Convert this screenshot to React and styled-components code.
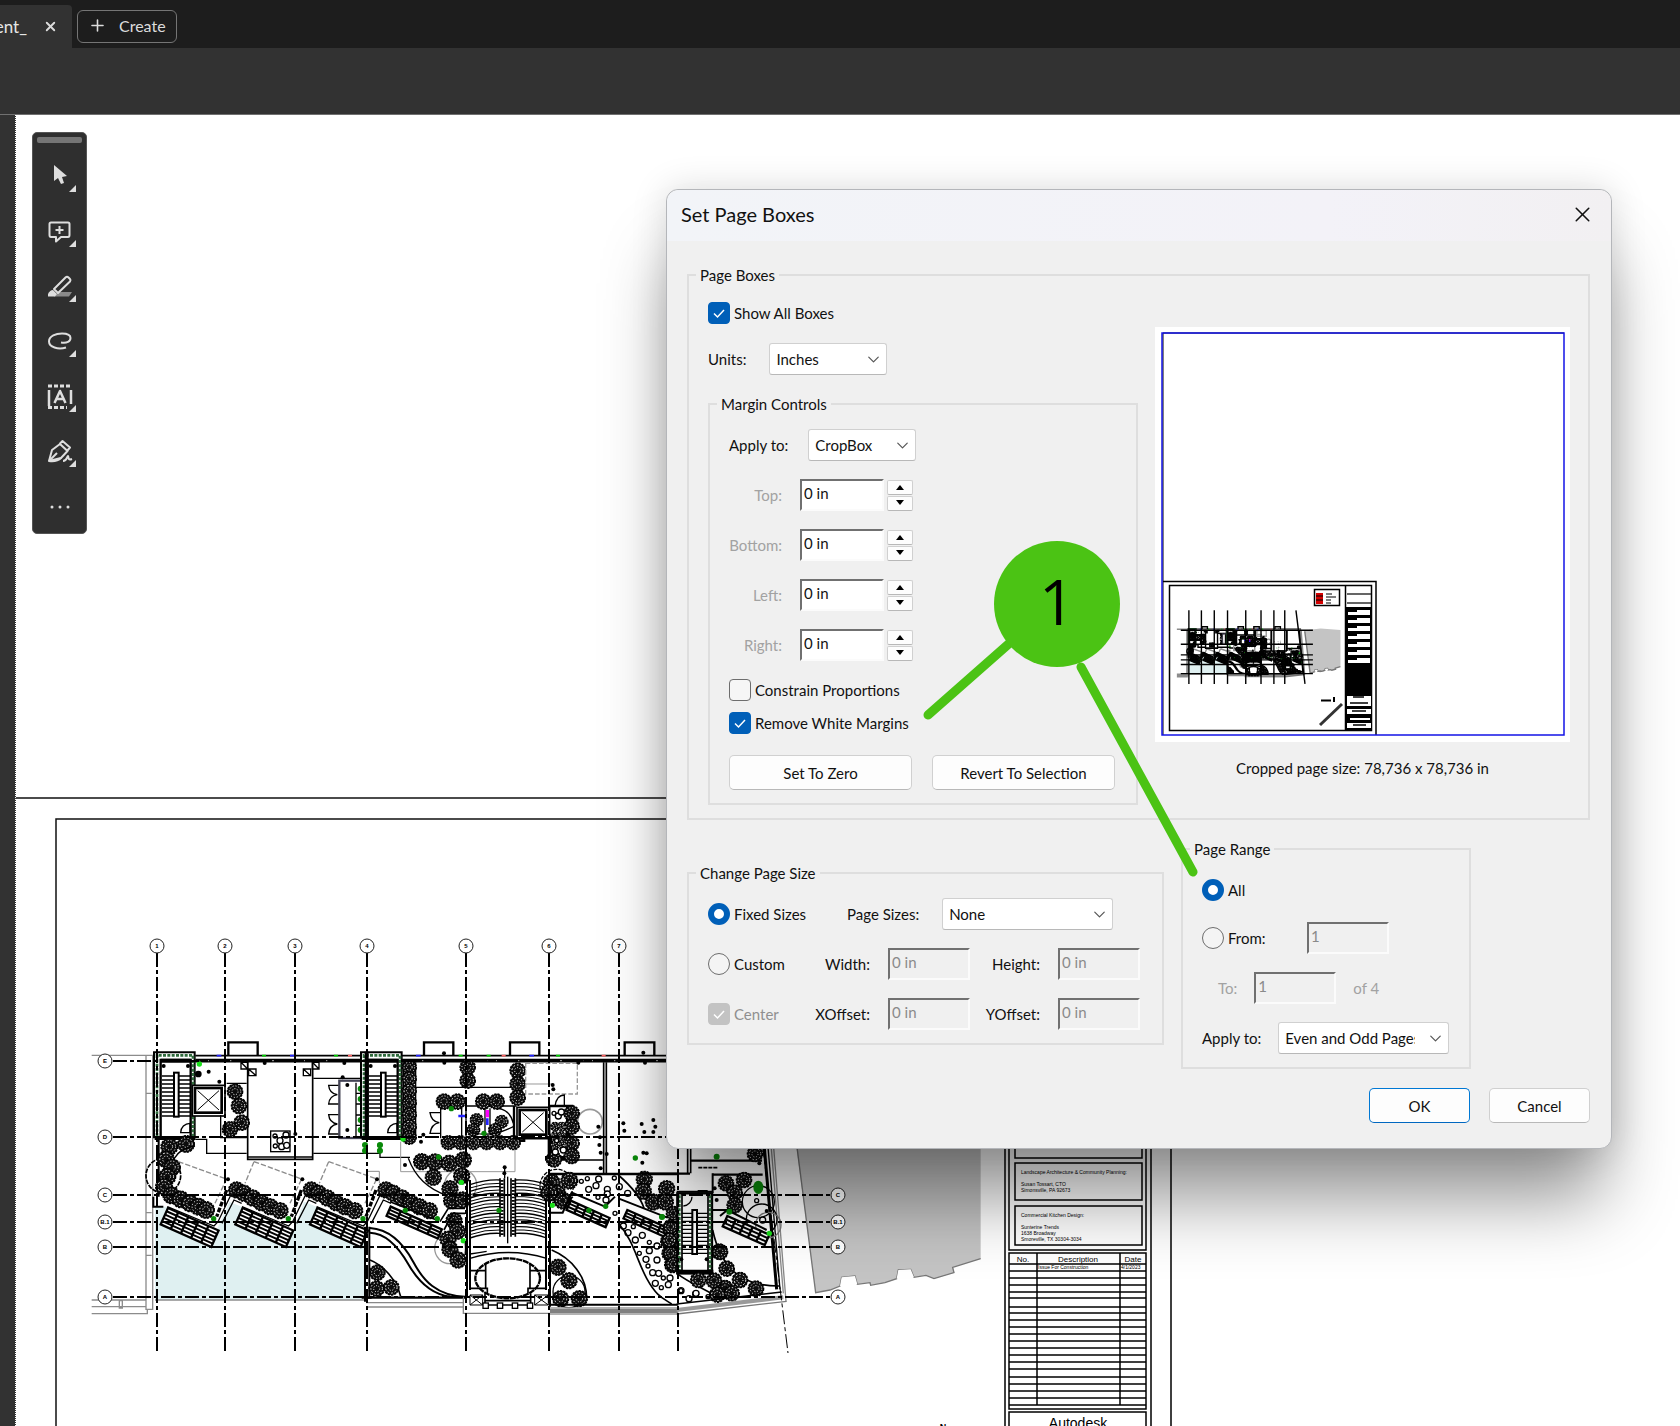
import React, { useState } from "react";
import styled, { createGlobalStyle } from "styled-components";
import { ChevronDown, Plus, X } from "lucide-react";

const GlobalStyle = createGlobalStyle`
	:root {
		--chrome: #323232;
		--dialog: #f0f0f0;
		--accent: #005fb8;
		--line: #dedede;
		--callout: #4bc314;
	}
	* {
		box-sizing: border-box;
	}
	body {
		margin: 0;
		background: #fff;
		color: #111;
		font-family: Lato, "Open Sans", sans-serif;
		font-size: 15px;
		line-height: 20px;
	}
	button, input, select {
		font: inherit;
		color: inherit;
	}
`;

const Shell = styled.div`
	position: relative;
	display: flex;
	flex-direction: column;
	min-height: 100vh;
	overflow: hidden;
`;

/* ---------- application chrome ---------- */

const TabBar = styled.header`
	display: flex;
	align-items: flex-end;
	gap: 5px;
	height: 48px;
	background: #1d1d1d;
	color: #e6e6e6;
`;

const Tab = styled.div`
	display: flex;
	align-items: center;
	justify-content: flex-end;
	gap: 16px;
	width: 72px;
	height: 43px;
	padding-right: 14px;
	border-top-right-radius: 4px;
	background: var(--chrome);
	font-size: 17px;
	overflow: hidden;
`;

const IconButton = styled.button`
	display: flex;
	padding: 0;
	border: 0;
	background: none;
`;

const CreateButton = styled.button`
	display: flex;
	align-items: center;
	gap: 12px;
	height: 33px;
	margin-bottom: 5px;
	padding: 0 10px 2px;
	border: 1px solid #757575;
	border-radius: 6px;
	background: none;
	color: #dcdcdc;
	font-size: 16px;
`;

const Ribbon = styled.div`
	height: 67px;
	border-bottom: 1px solid #707070;
	background: var(--chrome);
`;

const Workspace = styled.main`
	display: flex;
	flex: 1;
	position: relative;
`;

const Gutter = styled.div`
	width: 16px;
	border-right: 1px dotted #fff;
	background: var(--chrome);
`;

const Sheet = styled.svg`
	display: block;
	flex: none;
`;

const Palette = styled.nav`
	position: absolute;
	top: 17px;
	left: 32px;
	display: flex;
	flex-direction: column;
	align-items: center;
	width: 55px;
	padding: 4px 0 0;
	border: 1px solid #555;
	border-radius: 5px;
	background: #2f2f2f;
`;

const Grip = styled.div`
	width: 45px;
	height: 6px;
	margin-bottom: 8px;
	border-radius: 2px;
	background: #757575;
`;

const ToolButton = styled.button`
	display: flex;
	width: 53px;
	height: 55px;
	padding: 0;
	border: 0;
	background: none;

	&:last-child {
		height: 52px;
	}
`;

/* ---------- dialog ---------- */

const DialogLayer = styled.div`
	position: absolute;
	inset: 0;
	display: flex;
	justify-content: flex-end;
	align-items: flex-start;
	padding: 189px 68px 0 0;
`;

const Dialog = styled.section`
	position: relative;
	width: 946px;
	border: 1px solid #b4b6ba;
	border-radius: 12px;
	background: var(--dialog);
	box-shadow: 0 60px 72px -10px rgba(0, 0, 0, 0.42), 0 0 36px rgba(0, 0, 0, 0.14);
`;

const DialogHeader = styled.div`
	display: flex;
	align-items: center;
	justify-content: space-between;
	height: 51px;
	padding: 0 16px 3px 14px;
	border-radius: 12px 12px 0 0;
	background: linear-gradient(90deg, #f2f4f8, #f3f2f8 70%, #f2f0f2);
`;

const DialogTitle = styled.h1`
	margin: 0;
	font-size: 20px;
	font-weight: 400;
	line-height: 26px;
`;

const DialogBody = styled.form`
	display: flex;
	flex-direction: column;
	gap: 19px;
	padding: 24px 21px 25px 20px;
`;

const Group = styled.fieldset`
	display: flex;
	flex-direction: column;
	gap: 18px;
	min-width: 0;
	width: ${({ $width }) => ($width ? `${$width}px` : "auto")};
	margin: 0;
	padding: ${({ $top }) => $top || 15}px 18px 13px 19px;
	border: 2px solid var(--line);
`;

const Legend = styled.legend`
	margin-left: -12px;
	padding: 0 4px;
`;

const Columns = styled.div`
	display: flex;
	align-items: ${({ $align }) => $align || "flex-start"};
	gap: 17px;
`;

const Stack = styled.div`
	display: flex;
	flex-direction: column;
	gap: ${({ $gap }) => $gap || 19}px;
	padding-bottom: ${({ $bottom }) => $bottom || 0}px;
`;

const Row = styled.div`
	display: flex;
	align-items: center;
	gap: ${({ $gap }) => $gap || 20}px;
	min-height: 28px;
	padding-left: ${({ $indent }) => $indent || 0}px;
`;

const Label = styled.label`
	flex: none;
	width: ${({ $width }) => ($width ? `${$width}px` : "auto")};
	text-align: ${({ $width }) => ($width ? "right" : "left")};
	color: ${({ $muted }) => ($muted ? "#a2a2a2" : "inherit")};
`;

const SelectBox = styled.span`
	position: relative;
	display: block;
	width: ${({ $width }) => $width}px;

	svg {
		position: absolute;
		top: 7px;
		right: 4px;
		pointer-events: none;
	}
`;

const Select = styled.select`
	appearance: none;
	width: 100%;
	height: 32px;
	padding: 0 33px 0 6px;
	border: 1px solid #d0d0d0;
	border-bottom-color: #b8b8b8;
	border-radius: 3px;
	background: #fff;
`;

const TextInput = styled.input`
	width: 84px;
	height: 32px;
	padding: 0 2px 4px;
	border: 2px solid;
	border-color: #707070 #fbfbfb #fbfbfb #707070;
	background: #fff;

	&:disabled {
		width: 82px;
		background: var(--dialog);
		color: #8a8a8a;
	}
`;

const Spinner = styled.span`
	display: flex;
	flex-direction: column;
	gap: 1px;
`;

const SpinButton = styled.button`
	display: flex;
	align-items: center;
	justify-content: center;
	width: 26px;
	height: 15px;
	padding: 0;
	border: 1px solid #d0d0d0;
	border-bottom-color: #b8b8b8;
	border-radius: 2px;
	background: #fdfdfd;
`;

const ChoiceLabel = styled.label`
	display: flex;
	align-items: center;
	gap: 4px;
	width: ${({ $width }) => ($width ? `${$width}px` : "fit-content")};
	color: ${({ $muted }) => ($muted ? "#8f8f8f" : "inherit")};
	white-space: nowrap;
`;

const ChoiceMark = styled.span`
	position: relative;
	display: flex;
	width: 22px;
	height: 22px;

	svg {
		position: absolute;
		top: 4px;
		left: 4px;
		pointer-events: none;
	}
`;

const CheckInput = styled.input`
	appearance: none;
	width: 22px;
	height: 22px;
	margin: 0;
	border: 1px solid #6d6d6d;
	border-radius: 4px;
	background: #f6f6f6;

	&:checked {
		border-color: var(--accent);
		background: var(--accent);
	}
	&:checked:disabled {
		border-color: #c3c3c3;
		background: #c3c3c3;
	}
`;

const RadioInput = styled.input`
	appearance: none;
	flex: none;
	width: 22px;
	height: 22px;
	margin: 0;
	border: 1px solid #6d6d6d;
	border-radius: 50%;
	background: #f4f4f4;

	&:checked {
		border: 6px solid var(--accent);
		background: #fff;
	}
`;

const PushButton = styled.button`
	width: ${({ $width }) => $width || 183}px;
	height: 35px;
	border: 1px solid ${({ $primary }) => ($primary ? "#0078d4" : "#d0d0d0")};
	border-bottom-color: ${({ $primary }) => ($primary ? "#0067c0" : "#b8b8b8")};
	border-radius: 5px;
	background: #fdfdfd;
`;

const SizeGrid = styled.div`
	display: grid;
	grid-template-columns: 92px 52px 82px 52px 82px;
	column-gap: 18px;
	row-gap: 18px;
	align-items: center;

	${Label} {
		justify-self: end;
	}
`;

const PageSizeCell = styled.div`
	grid-column: 2 / -1;
	display: flex;
	align-items: center;
	gap: 23px;
	padding-left: 29px;
`;

const Preview = styled.figure`
	display: flex;
	flex-direction: column;
	align-items: center;
	gap: 16px;
	margin: 25px 0 0;
`;

const Footer = styled.div`
	display: flex;
	justify-content: flex-end;
	gap: 19px;
`;

const Callout = styled.svg`
	position: absolute;
	top: 339px;
	left: 249px;
	pointer-events: none;
`;

const CalloutStroke = styled.path`
	fill: none;
	stroke: var(--callout);
	stroke-width: 9;
	stroke-linecap: round;
`;

const CalloutDisc = styled.circle`
	fill: var(--callout);
`;

const CalloutNumber = styled.text`
	font-family: "Open Sans", sans-serif;
	font-size: 63px;
	text-anchor: middle;
`;

/* ---------- drawing ---------- */

const Fleck = styled.circle`
	fill: none;
	stroke: #fff;
`;

const Ink = styled.g`
	fill: none;
	stroke: #000;
	stroke-width: 4;
`;

// small copy of the plan, where every stroke keeps the same weight
const Miniature = styled.g`
	* {
		vector-effect: non-scaling-stroke;
		stroke-width: 1.4;
		stroke-dasharray: none;
	}
	${Fleck} {
		display: none;
	}
`;

const SheetText = styled.text`
	font-family: "Liberation Sans", sans-serif;
	font-size: ${({ $size }) => $size || 5}px;
	font-weight: ${({ $bold }) => ($bold ? 700 : 400)};
	text-anchor: ${({ $middle }) => ($middle ? "middle" : "start")};
`;

const AXES = [157, 225, 295, 367, 466, 549, 619, 678];
const LEVELS = [
	["E", 1061],
	["D", 1137],
	["C", 1195],
	["B.1", 1222],
	["B", 1247],
	["A", 1297],
];

const Trees = ({ at, r = 24 }) => (
	<>
		{at.map(([x, y], i) => (
			<g key={i}>
				<circle cx={x} cy={y} r={r - 1} fill="#0c0c0c" strokeWidth="4" strokeDasharray="7 3" />
				<Fleck cx={x} cy={y} r={r * 0.72} strokeWidth="3" strokeDasharray={`${3 + (i % 3)} 6`} />
				<Fleck cx={x} cy={y} r={r * 0.38} strokeWidth="3" strokeDasharray="3 5" />
			</g>
		))}
	</>
);

const Dots = ({ at, r = 6, fill = "#000" }) => (
	<g fill={fill} stroke="none">
		{at.map(([x, y], i) => (
			<circle key={i} cx={x} cy={y} r={r} />
		))}
	</g>
);

const Pebbles = ({ at }) => at.map(([x, y], i) => <circle key={i} cx={x} cy={y} r={i % 3 === 0 ? 6 : 9} fill="#fff" />);

const range = (n) => Array.from({ length: n }, (_, i) => i);

const Deck = ({ x, y, w, h, rows = 5, angle = 24 }) => (
	<g transform={`translate(${x} ${y}) rotate(${angle})`}>
		<rect width={w} height={h} strokeWidth="7" fill="#fff" />
		{range(rows - 1).map((i) => (
			<path key={i} d={`M0 ${((i + 1) * h) / rows}H${w}`} strokeWidth="6" />
		))}
		{range(4).map((i) => (
			<path key={i} d={`M${((i + 1) * w) / 5} 0V${h}`} strokeWidth="7" />
		))}
	</g>
);

const Flight = ({ x, y, w = 36, steps = 11 }) => (
	<>
		{range(steps).map((i) => (
			<path key={i} d={`M${x} ${y + i * 12}h${w}M${x + w + 14} ${y + i * 12}h${w}`} />
		))}
		<rect x={x + w} y={y - 10} width="14" height={steps * 12} strokeWidth="6" fill="#fff" />
	</>
);

const StairTower = ({ x }) => (
	<g transform={`translate(${x} 0)`}>
		<path d="M282 67H404V322H282Z" strokeWidth="6" fill="#fff" />
		<path d="M291 318V76H399V318" stroke="#2f6b3c" strokeWidth="8" strokeDasharray="9 4" />
		<path d="M302 322V90H392V322" strokeWidth="7" />
		<path d="M302 92H392M284 324H406" strokeWidth="12" />
		<Flight x={306} y={138} />
		<Dots at={[[311, 108], [384, 108]]} />
		<path d="M362 308A28 28 0 0 1 390 280V308Z" />
	</g>
);

const Lift = ({ x, y }) => (
	<g transform={`translate(${x} ${y})`}>
		<rect x="-8" y="-8" width="98" height="92" strokeWidth="5" fill="#fff" />
		<rect width="80" height="74" strokeWidth="8" />
		<path d="M8 8L72 66M72 8L8 66" strokeWidth="3" />
	</g>
);

const RUN = [[530, 480], [552, 490], [578, 504], [604, 518], [630, 530], [660, 542]];

const WestWing = () => (
	<Ink>
		<path
			d="M285 530H320L470 600L508 515L545 530L700 600L732 515L770 530L915 600V810H285Z"
			fill="#dff0f1"
			stroke="none"
		/>
		<g stroke="#8c8c8c">
			<path d="M95 76H280M258 77V838H278V77M258 190H275M258 548H275M258 676H275" />
			<path d="M95 810H258M95 830H258M95 851H262V838M178 812h9v22h-9z" />
			<path d="M355 395L500 447L465 520M582 395L725 447L690 520M582 395L555 460M806 395L950 447L915 520M806 395L778 460" strokeDasharray="16 6" />
			<path d="M920 424H958V460" strokeWidth="3" />
			<path d="M285 810H915" />
		</g>
		<path d="M406 77H2120" strokeWidth="5" />
		<path d="M406 92H2120" strokeWidth="11" />
		<path d="M412 92H2116" stroke="#fff" strokeWidth="2" strokeDasharray="6 26" />
		<path d="M505 77V37H593V77M1092 77V37H1180V77M1350 77V37H1438V77M1694 77V37H1783V77" strokeWidth="7" />
		<g strokeWidth="5">
			<path d="M470 77h14M690 77h14M1068 77h14M1408 77h14" stroke="#22f" />
			<path d="M606 77h12M822 77h12M1196 77h12M1280 77h12M1488 77h12" stroke="#0c0" />
			<path d="M864 77h12M1325 77h12M1625 77h12" stroke="#f66" />
		</g>
		<StairTower x={0} />
		<Lift x={405} y={174} />
		<path d="M563 96V388H758V96M563 381H758" strokeWidth="5" />
		<path d="M543 97h20v20h-20zM566 117h22v20h-22zM730 117h22v20h-22zM757 97h20v20h-20zM543 97l20 20M566 117l22 20M730 117l22 20M757 97l20 20" />
		<rect x="632" y="303" width="58" height="62" />
		<Pebbles at={[[645, 318], [660, 332], [678, 315], [646, 348], [665, 350], [680, 346]]} />
		<path d="M406 328H440V370H560M760 145H918M760 370H960V382H1050M482 255V323H560M500 160H560" />
		<Trees at={[[525, 185], [537, 228], [545, 278], [510, 298]]} />
		<rect x="838" y="152" width="80" height="172" stroke="#445" strokeWidth="7" />
		<path d="M888 158V318M888 190H916M888 222H916M888 255H916M888 286H916" />
		<path d="M835 166H806Q808 190 832 194Q808 198 806 222H835M835 254H806Q808 278 832 282Q808 286 806 312H835" />
		<Dots fill="#0a8a0a" r={9} at={[[902, 176], [902, 207], [902, 270], [902, 300], [915, 345], [915, 362], [960, 345], [960, 362]]} />
		<Dots at={[[862, 165], [862, 300], [848, 142], [706, 312], [478, 155], [614, 99], [853, 99], [504, 448], [727, 448], [951, 448], [446, 125]]} />
		<Dots r={10} at={[[415, 132]]} />
		<Dots r={8} fill="#1be01b" at={[[418, 102]]} />
		<circle cx="310" cy="437" r="52" strokeWidth="5" strokeDasharray="14 3" />
		<path d="M296 330V500M280 500V530H310" strokeWidth="6" />
		<Trees
			r={26}
			at={[[328, 350], [378, 342], [318, 388], [336, 412], [322, 440], [312, 470], [334, 496], [362, 508], [390, 520], [415, 530], [438, 540]]}
		/>
		<path d="M343 385Q360 355 405 348" />
		{[0, 224, 448].map((dx) => (
			<g key={dx} transform={`translate(${dx} 0)`}>
				<path d="M322 530L462 588L474 575L515 490M486 580L522 510L545 520" strokeWidth="4" />
				<Deck x={324} y={534} w={166} h={54} />
				<path d="M500 480L470 560" strokeWidth="10" strokeDasharray="14 5" />
				<Dots r={8} fill="#0a8a0a" at={[[461, 566]]} />
			</g>
		))}
		<Trees r={25} at={RUN} />
		<Trees r={25} at={RUN.map(([x, y]) => [x + 224, y])} />
		<Trees r={25} at={RUN.map(([x, y]) => [x + 448, y])} />
		<path d="M915 590V815M928 590V803M905 803H935" strokeWidth="6" />
		<path d="M930 690C970 706 1010 750 1022 800" strokeWidth="5" />
		<Trees at={[[952, 728], [950, 776], [994, 772]]} />
		<StairTower x={621} />
		<path d="M920 65V325" strokeWidth="12" />
	</Ink>
);

const CentralCourt = () => (
	<Ink>
		<path d="M100 97V322H137V97M137 172H425M288 228H440M212 230V325M275 230V325M288 228V320" />
		<Trees r={22} at={[[118, 112], [118, 146], [118, 182], [118, 218], [118, 254], [118, 290], [118, 322]]} />
		<Trees at={[[293, 112], [293, 152], [443, 122], [443, 162], [443, 203]]} />
		<g stroke="#999">
			<path d="M467 100H622V192H467Z" strokeDasharray="14 6" />
			<path d="M92 335V425H435V335M467 162H548" strokeWidth="3" />
			<circle cx="660" cy="275" r="37" strokeWidth="5" />
			<circle cx="272" cy="465" r="48" />
			<circle cx="240" cy="655" r="46" />
		</g>
		<Trees at={[[222, 215], [262, 215], [340, 215], [380, 215]]} />
		<path d="M212 332H462V310" strokeWidth="8" />
		<path d="M212 248H180Q184 276 208 278Q184 282 180 310H212" />
		<Trees r={20} at={[[320, 270], [395, 275], [375, 300], [310, 300]]} />
		<path d="M345 235V310M360 235V310M290 300Q350 330 430 290M385 235Q420 240 430 280" />
		<path d="M352 240V262" stroke="#f0f" strokeWidth="10" />
		<path d="M352 265V285M265 258H287" stroke="#22f" strokeWidth="8" />
		<Trees r={22} at={[[235, 338], [272, 338], [310, 338], [350, 338], [390, 338], [430, 338]]} />
		<Lift x={449} y={240} />
		<path d="M432 228V325H540M535 228H610" strokeWidth="7" />
		<path d="M555 228Q560 195 583 195V228" />
		<path d="M595 230V390M540 320V400M525 385H600" strokeWidth="14" />
		<Trees at={[[605, 250], [605, 290], [605, 340], [605, 378], [552, 388]]} />
		<Trees r={14} at={[[555, 290], [575, 290], [555, 318], [575, 318], [555, 345], [575, 345]]} />
		<Pebbles at={[[552, 250], [565, 258], [574, 246], [560, 332], [580, 360], [556, 366]]} />
		<path d="M701 97V430M709 97V430M600 390H700" strokeWidth="5" />
		<path d="M540 432H925" strokeWidth="7" />
		<Dots
			at={[[760, 280], [763, 302], [815, 282], [823, 306], [850, 270], [856, 290], [850, 306], [685, 290], [690, 322], [688, 345], [692, 368], [692, 415], [820, 368], [830, 370], [817, 398], [548, 165], [550, 178], [222, 70], [820, 68], [153, 335], [160, 314], [105, 405], [404, 412], [403, 430], [710, 372], [223, 98], [625, 98], [825, 98]]}
		/>
		<Trees r={25} at={[[155, 395], [195, 396], [238, 400], [280, 390], [190, 442], [275, 438], [240, 476], [245, 512], [278, 510], [252, 572], [262, 604], [234, 628], [240, 658], [264, 690]]} />
		<path d="M115 385C135 440 175 478 232 497M404 412V445" />
		<path d="M210 575L235 535H285M222 600L248 550H285" strokeWidth="5" />
		<Deck x={62} y={530} w={168} h={30} rows={3} />
		<path d="M60 515L200 570" strokeWidth="5" />
		<path d="M0 594C60 598 100 640 130 696S200 798 285 800M0 608C52 610 88 655 116 704S180 792 240 800" strokeWidth="6" />
		<path d="M-12 803H285" strokeWidth="7" />
		<path d="M-12 818H280M-12 831H280M280 800V850H540" stroke="#888" />
		{/* seating steps */}
		{range(17).map((i) => (
			<path key={i} d={`M300 ${464 + i * 10}Q345 ${448 + i * 10} 390 ${450 + i * 10}M436 ${450 + i * 10}Q490 ${448 + i * 10} 530 ${464 + i * 10}`} strokeWidth={i % 2 ? 3 : 4} />
		))}
		<path d="M390 445V620M403 445V620M423 445V620M436 445V620" strokeWidth="5" />
		<path d="M396 450V616M430 450V616" strokeWidth="9" strokeDasharray="5 5" />
		<path d="M413 440V640" />
		<path d="M291 450V800M300 450V780M528 450V780M540 432V830" strokeWidth="6" />
		<path d="M300 685Q415 650 530 685M300 672Q330 668 350 664" strokeWidth="4" />
		<ellipse cx="413" cy="745" rx="97" ry="60" strokeWidth="7" strokeDasharray="18 2" />
		<path d="M347 700V775M480 700V775M300 722H345M480 722H528M300 775H352V790M528 775H474V790M345 790V825H482V790M345 812H482" strokeWidth="5" />
		<path d="M300 795H338V825H300ZL338 825M338 795L300 825M494 795H535V825H494ZL535 825M535 795L494 825" strokeWidth="3" />
		<g fill="#fff">
			{[347, 390, 435, 480].map((x) => (
				<rect key={x} x={x - 8} y="819" width="16" height="16" />
			))}
		</g>
		<circle cx="560" cy="468" r="50" strokeDasharray="12 4" />
		<Trees r={26} at={[[545, 458], [598, 452], [562, 490], [578, 512], [538, 488]]} />
		<path d="M540 548H578L605 488L705 530L735 500M590 520L608 500" strokeWidth="6" />
		<path d="M745 505L890 562L905 540" strokeWidth="6" />
		<Deck x={602} y={512} w={128} h={30} rows={3} />
		<Deck x={772} y={540} w={138} h={28} rows={3} />
		<Pebbles
			at={[[634, 454], [656, 478], [678, 467], [652, 446], [686, 447], [712, 478], [684, 502], [712, 492], [708, 510], [733, 444], [748, 470], [773, 490], [735, 550], [760, 588], [774, 608], [790, 590], [817, 616], [796, 630], [838, 637], [838, 662], [861, 648], [808, 670], [828, 688], [861, 690], [834, 708], [848, 728], [866, 730], [880, 744], [856, 760], [895, 764], [874, 773], [900, 744], [933, 782], [957, 806], [977, 792]]}
		/>
		<path d="M745 435C785 470 812 500 822 535M745 580C790 630 800 690 830 745S880 805 905 822" strokeWidth="5" />
		<Trees r={25} at={[[823, 448], [820, 484], [890, 476], [850, 516], [886, 516], [902, 596], [896, 634], [900, 670], [908, 704]]} />
		<path d="M545 660C605 685 650 740 650 805" strokeWidth="5" />
		<circle cx="597" cy="785" r="48" />
		<Trees r={25} at={[[564, 712], [597, 752], [572, 806], [628, 806]]} />
		<path d="M540 824H925" strokeWidth="6" />
		<path d="M540 834H925M540 852H925" stroke="#999" />
		<path d="M540 843H925" stroke="#808080" strokeWidth="12" />
		<Dots r={8} fill="#0a8a0a" at={[[244, 236], [342, 310], [206, 381], [29, 346], [29, 362], [106, 541], [202, 566], [387, 541], [657, 541], [707, 529], [876, 560], [796, 384]]} />
		<Dots r={8} fill="#1be01b" at={[[99, 327], [274, 457], [280, 632], [547, 526]]} />
	</Ink>
);

const EastWing = () => (
	<Ink>
		<path
			d="M470 57L440 -190L520 -215L700 -235L1022 -210V386L938 412L942 428L882 446L858 436L822 442L812 418L775 420L770 446L735 458L692 466L690 458L652 463L645 438L605 442L600 468L570 480L527 488Z"
			fill="#c4c4c4"
			stroke="none"
		/>
		<path
			d="M440 -190L527 488L570 480L600 468L605 442L645 438L652 463L690 458L692 466L735 458L770 446L775 420L812 418L822 442L858 436L882 446L942 428L938 412L1022 386"
			stroke="#777"
		/>
		<path d="M605 442L645 438L652 463L600 468ZM775 420L812 418L822 442L770 446Z" fill="#fff" stroke="none" />
		<path d="M143 -200V130M152 -200V130" strokeWidth="5" />
		<path d="M0 131H150M218 134H368M152 92H366" strokeWidth="7" />
		<path d="M175 113H235" strokeWidth="5" strokeDasharray="12 3" />
		<path d="M350 -210L410 478" strokeWidth="9" />
		<path d="M362 -210L420 478" strokeWidth="4" />
		<path d="M372 -210L430 490M380 -210L438 514" stroke="#888" />
		<path d="M218 130V190M110 185H220" strokeWidth="6" />
		<circle cx="355" cy="215" r="48" />
		<circle cx="365" cy="268" r="46" />
		<circle cx="385" cy="285" r="38" stroke="#777" />
		<Trees r={24} at={[[258, 160], [312, 150], [284, 188], [284, 226], [345, 72], [238, 365]]} />
		<Pebbles at={[[350, 212], [368, 270]]} />
		<path d="M218 240H262L380 300M240 258L262 240" strokeWidth="6" />
		<Deck x={262} y={258} w={138} h={34} rows={3} />
		<Trees r={22} at={[[100, 250], [92, 290], [88, 330], [92, 370], [100, 402]]} />
		<rect x="112" y="190" width="104" height="240" fill="#fff" strokeWidth="7" />
		<path d="M118 196V424M210 196V424" stroke="#2f6b3c" strokeWidth="8" strokeDasharray="9 4" />
		<path d="M126 192V430M204 192V430" strokeWidth="5" />
		<path d="M110 426H220" strokeWidth="14" />
		<path d="M175 182h26v8h-26zM130 228A28 28 0 0 0 156 200" />
		<Flight x={125} y={250} w={32} />
		<Dots at={[[124, 388], [200, 388], [224, 175], [230, 210], [358, 100], [380, 243]]} />
		<path d="M218 300C240 400 290 470 420 468M110 430C150 460 200 480 230 500" strokeWidth="5" />
		<Trees r={24} at={[[240, 366], [260, 416], [300, 450], [255, 474], [222, 452], [175, 450], [348, 476], [275, 490], [232, 494]]} />
		<Pebbles at={[[123, 482], [147, 506], [168, 490], [204, 500]]} />
		<path d="M110 522L425 486" strokeWidth="5" />
		<path d="M110 540L430 502" stroke="#999" strokeWidth="12" />
		<path d="M110 552L440 514" stroke="#777" />
		<ellipse cx="355" cy="172" rx="15" ry="20" fill="#0a8a0a" stroke="none" />
		<Dots r={9} fill="#0a8a0a" at={[[230, 80], [268, 245], [66, 261]]} />
		<Dots r={8} fill="#1be01b" at={[[388, 310]]} />
	</Ink>
);

const Building = () => (
	<g transform="translate(60 1030) scale(0.33333)">
		<WestWing />
		<g transform="translate(930 0)">
			<CentralCourt />
		</g>
		<g transform="translate(1740 300)">
			<EastWing />
		</g>
	</g>
);

const Axes = () => (
	<g stroke="#000" strokeWidth="2" strokeDasharray="14 3 4 3">
		{AXES.map((x) => (
			<path key={x} d={`M${x} 953V1353`} />
		))}
		{LEVELS.map(([name, y]) => (
			<path key={name} d={`M113 ${y}H831`} />
		))}
		<path d="M739 953L788 1353" strokeWidth="1" />
	</g>
);

const Bubble = ({ x, y, name }) => (
	<g>
		<circle cx={x} cy={y} r="7" fill="#fff" stroke="#222" />
		<SheetText x={x} y={y + 2} $size={6} $middle $bold>
			{name}
		</SheetText>
	</g>
);

const REVISION_LINES = [1264, 1271, 1278, 1285, 1292, 1298, 1307, 1313, 1320, 1327, 1334, 1341, 1348, 1355, 1362, 1369, 1377, 1384, 1391, 1398, 1405];

const TitleBlock = () => (
	<g>
		<g fill="none" stroke="#000" strokeWidth="1.5">
			<path d="M1005 819V1430M1151 819V1430M1171 798V1430" />
			<rect x="1009" y="823" width="137" height="427" />
			<rect x="1015" y="1100" width="127" height="58" />
			<rect x="1015" y="1163" width="127" height="37" />
			<rect x="1015" y="1206" width="127" height="39" />
			<rect x="1009" y="1253" width="137" height="156" />
			<rect x="1009" y="1412" width="137" height="40" />
			<path d="M1037 1253V1405M1120 1253V1405" />
			<path d={REVISION_LINES.map((y) => `M1009 ${y}H1146`).join("")} />
		</g>
		<SheetText x="1021" y="1174">Landscape Architecture &amp; Community Planning:</SheetText>
		<SheetText x="1021" y="1186">Susan Tossart, CTO</SheetText>
		<SheetText x="1021" y="1192">Simonsville, PA 92673</SheetText>
		<SheetText x="1021" y="1217">Commercial Kitchen Design:</SheetText>
		<SheetText x="1021" y="1229">Sunterine Trends</SheetText>
		<SheetText x="1021" y="1235">1638 Broadway</SheetText>
		<SheetText x="1021" y="1241">Smoreville, TX 30304-3034</SheetText>
		<SheetText x="1023" y="1262" $size={8} $middle>No.</SheetText>
		<SheetText x="1078" y="1262" $size={8} $middle>Description</SheetText>
		<SheetText x="1133" y="1262" $size={8} $middle>Date</SheetText>
		<SheetText x="1038" y="1269">Issue For Construction</SheetText>
		<SheetText x="1121" y="1269">4/1/2023</SheetText>
		<SheetText x="1078" y="1428" $size={14} $middle>Autodesk</SheetText>
	</g>
);

const SheetDrawing = () => (
	<Sheet width="1184" height="1311" viewBox="16 115 1184 1311" role="img" aria-label="Floor plan">
		<path d="M16 798H1171M56 1430V819H1151" fill="none" stroke="#111" strokeWidth="1.5" />
		<Building />
		<Axes />
		{AXES.map((x, i) => (
			<Bubble key={x} x={x} y={946} name={i + 1} />
		))}
		{LEVELS.map(([name, y]) => (
			<g key={name}>
				<Bubble x={105} y={y} name={name} />
				<Bubble x={838} y={y} name={name} />
			</g>
		))}
		<TitleBlock />
		<SheetText x="943" y="1430" $size={9} $middle $bold>N</SheetText>
	</Sheet>
);

const PreviewDrawing = () => (
	<svg width="415" height="415" viewBox="1155 327 415 415" role="img" aria-label="Cropped page preview">
		<path fill="#fff" d="M1155 327H1570V742H1155Z" />
		<Miniature>
			<g transform="translate(1160 435) scale(0.184)">
				<Building />
				<Axes />
			</g>
		</Miniature>
		<path d="M1163 735V333H1564" fill="none" stroke="#000" />
		<path d="M1163 581.5H1376V735M1169.5 585.5H1371.5V730.5H1169.5ZM1345.5 585V730" fill="none" stroke="#000" strokeWidth="1.5" />
		<rect x="1314.5" y="589.5" width="25" height="16" fill="#fff" stroke="#000" strokeWidth="1.5" />
		<path d="M1316 593H1323V604H1316Z" fill="#d40000" />
		<path d="M1316 596H1323M1316 600H1323M1326 594H1332M1326 597H1336M1326 600H1331M1326 603H1331" stroke="#000" />
		<path d="M1347 594H1371M1347 603H1371" stroke="#333" strokeWidth="1.5" />
		<path d="M1346 607H1372V731H1346Z" />
		<g fill="#fff">
			{[610, 618, 626, 634, 642, 650, 658].map((y) => (
				<path key={y} d={`M1348 ${y + 2}h22v3h-22zM1357 ${y}h13v3h-13z`} />
			))}
			<path d="M1347 696h24v10h-24zM1347 709h24v5h-24zM1350 718h20v2h-20zM1347 723h24v5h-24z" />
		</g>
		<path d="M1353 697H1364M1350 703H1368M1352 711H1366M1353 725H1366" stroke="#000" strokeWidth="1.5" />
		<path d="M1320 725L1342 704" stroke="#333" strokeWidth="3" />
		<path d="M1321 700.5H1331M1334 697V702" stroke="#000" strokeWidth="2" />
		<path d="M1162 333H1564V735H1162Z" fill="none" stroke="#1414e6" strokeWidth="1.5" />
	</svg>
);

/* ---------- palette icons ---------- */

const TOOLS = [
	{
		name: "Select",
		art: <path d="M21 14V30L25 27L28 33L31 32L29 26L34 25Z" fill="#dedede" stroke="none" />,
	},
	{
		name: "Add comment",
		art: <path d="M18 16.500H35Q36.500 16.500 36.500 18V29Q36.500 31 35 31H28L23 35.500V31H18Q16.500 31 16.500 29V18Q16.500 16.500 18 16.500ZM26.500 20V28M22.500 24H30.500" />,
	},
	{
		name: "Highlight",
		art: (
			<>
				<path d="M25 31H39L36 35.500H21Z" fill="#8a8a8a" stroke="none" />
				<path d="M21 28L32.500 16.500Q34 15 35.500 16.500L37 18Q38 19 37 20.500L25 32Z" fill="#2f2f2f" />
				<path d="M20 29L24 33L22 35.500H15V33Q17 29 20 29Z" fill="#dedede" stroke="none" />
			</>
		),
	},
	{
		name: "Draw",
		art: <path d="M33 31.500C25 34 16 31 16 25.500C16 20 23 17.500 29 17.500C35 17.500 37.500 19 37.500 22C37.500 25.500 34 27.500 28 26.500" />,
	},
	{
		name: "Text box",
		art: (
			<>
				<path d="M15 15H39M15 36.500H34" strokeWidth="3" strokeDasharray="4 2" />
				<path d="M16 19V35M38 19V33" strokeWidth="2.500" />
				<path d="M21.500 32L27 20L32.500 32M24 28H30" strokeWidth="2.500" />
			</>
		),
	},
	{
		name: "Sign",
		art: (
			<>
				<path d="M16 35L19 24L27 18L34.500 25L28 32Z" />
				<path d="M26.500 18L29.500 15L37 21.500L34 25M16 35L24 27M16 35Q24 36 28 32M30 35C34 35 34 30 35 30S34 35 39 33" />
			</>
		),
	},
];

const ToolIcon = ({ children }) => (
	<svg width="53" height="55" viewBox="0 0 53 55" fill="none" stroke="#dedede" strokeWidth="2" strokeLinejoin="round">
		{children}
		<path d="M43 34V41H36Z" fill="#dedede" stroke="none" />
	</svg>
);

/* ---------- form parts ---------- */

const Dropdown = ({ id, width, options }) => (
	<SelectBox $width={width}>
		<Select id={id}>
			{options.map((option) => (
				<option key={option}>{option}</option>
			))}
		</Select>
		<ChevronDown size={19} strokeWidth={1.5} color="#555" />
	</SelectBox>
);

const Checkbox = ({ label, defaultChecked, disabled }) => (
	<ChoiceLabel $muted={disabled}>
		<ChoiceMark>
			<CheckInput type="checkbox" defaultChecked={defaultChecked} disabled={disabled} />
			{defaultChecked && (
				<svg width="14" height="14" viewBox="0 0 14 14" fill="none" stroke="#fff" strokeWidth="1.500">
					<path d="M2 7.500L5.500 11L12 4" />
				</svg>
			)}
		</ChoiceMark>
		{label}
	</ChoiceLabel>
);

const Radio = ({ name, label, width, ...rest }) => (
	<ChoiceLabel $width={width}>
		<RadioInput type="radio" name={name} {...rest} />
		{label}
	</ChoiceLabel>
);

const MarginField = ({ side }) => {
	const [value, setValue] = useState(0);
	const id = `margin-${side.toLowerCase()}`;
	return (
		<Row $gap={18}>
			<Label htmlFor={id} $width={53} $muted>
				{side}:
			</Label>
			<Row $gap={3}>
				<TextInput id={id} value={`${value} in`} readOnly />
				<Spinner>
					<SpinButton type="button" aria-label={`Increase ${side}`} onClick={() => setValue(value + 1)}>
						<svg width="10" height="6" viewBox="0 0 10 6"><path d="M1 6L5 1L9 6Z" /></svg>
					</SpinButton>
					<SpinButton type="button" aria-label={`Decrease ${side}`} onClick={() => setValue(Math.max(0, value - 1))}>
						<svg width="10" height="6" viewBox="0 0 10 6"><path d="M1 0L5 5L9 0Z" /></svg>
					</SpinButton>
				</Spinner>
			</Row>
		</Row>
	);
};

const SizeField = ({ id, label }) => (
	<>
		<Label htmlFor={id}>{label}</Label>
		<TextInput id={id} defaultValue="0 in" disabled />
	</>
);

function PageBoxes() {
	return (
		<Group $top={17}>
			<Legend>Page Boxes</Legend>
			<Columns>
				<Stack>
					<Checkbox label="Show All Boxes" defaultChecked />
					<Row $gap={23}>
						<Label htmlFor="units">Units:</Label>
						<Dropdown id="units" width={118} options={["Inches", "Points", "Millimeters"]} />
					</Row>
					<Group $width={430}>
						<Legend>Margin Controls</Legend>
						<Row>
							<Label htmlFor="margin-box">Apply to:</Label>
							<Dropdown id="margin-box" width={108} options={["CropBox", "TrimBox", "BleedBox"]} />
						</Row>
						<MarginField side="Top" />
						<MarginField side="Bottom" />
						<MarginField side="Left" />
						<MarginField side="Right" />
						<Stack $gap={11} $bottom={3}>
							<Checkbox label="Constrain Proportions" />
							<Checkbox label="Remove White Margins" defaultChecked />
						</Stack>
						<Row>
							<PushButton type="button">Set To Zero</PushButton>
							<PushButton type="button">Revert To Selection</PushButton>
						</Row>
					</Group>
				</Stack>
				<Preview>
					<PreviewDrawing />
					<figcaption>Cropped page size: 78,736 x 78,736 in</figcaption>
				</Preview>
			</Columns>
		</Group>
	);
}

function ChangePageSize() {
	return (
		<Group $width={477}>
			<Legend>Change Page Size</Legend>
			<SizeGrid>
				<Radio name="size" label="Fixed Sizes" defaultChecked />
				<PageSizeCell>
					<Label htmlFor="page-sizes">Page Sizes:</Label>
					<Dropdown id="page-sizes" width={171} options={["None", "A4", "Letter"]} />
				</PageSizeCell>
				<Radio name="size" label="Custom" />
				<SizeField id="width" label="Width:" />
				<SizeField id="height" label="Height:" />
				<Checkbox label="Center" defaultChecked disabled />
				<SizeField id="x-offset" label="XOffset:" />
				<SizeField id="y-offset" label="YOffset:" />
			</SizeGrid>
		</Group>
	);
}

function PageRange() {
	return (
		<Group $width={290} $top={17}>
			<Legend>Page Range</Legend>
			<Row>
				<Radio name="range" label="All" defaultChecked />
			</Row>
			<Row $gap={1}>
				<Radio name="range" label="From:" width={104} />
				<TextInput aria-label="From page" defaultValue="1" disabled />
			</Row>
			<Row $indent={16} $gap={17}>
				<Label htmlFor="range-to" $muted>To:</Label>
				<TextInput id="range-to" defaultValue="1" disabled />
				<Label as="span" $muted>of 4</Label>
			</Row>
			<Row $gap={17}>
				<Label htmlFor="range-apply">Apply to:</Label>
				<Dropdown id="range-apply" width={171} options={["Even and Odd Pages", "Even Pages Only", "Odd Pages Only"]} />
			</Row>
		</Group>
	);
}

function App() {
	return (
		<Shell>
			<GlobalStyle />
			<TabBar>
				<Tab>
					<span>ent_</span>
					<IconButton type="button" aria-label="Close tab">
						<X size={15} strokeWidth={3} color="#dcdcdc" />
					</IconButton>
				</Tab>
				<CreateButton type="button">
					<Plus size={19} strokeWidth={2} />
					Create
				</CreateButton>
			</TabBar>
			<Ribbon />
			<Workspace>
				<Gutter />
				<SheetDrawing />
				<Palette aria-label="Tools">
					<Grip />
					{TOOLS.map(({ name, art }) => (
						<ToolButton key={name} type="button" aria-label={name}>
							<ToolIcon>{art}</ToolIcon>
						</ToolButton>
					))}
					<ToolButton type="button" aria-label="More tools">
						<svg width="53" height="52" viewBox="0 0 53 52" fill="#dedede">
							<circle cx="19" cy="26" r="1.500" />
							<circle cx="27" cy="26" r="1.500" />
							<circle cx="35" cy="26" r="1.500" />
						</svg>
					</ToolButton>
				</Palette>
			</Workspace>
			<DialogLayer>
				<Dialog role="dialog" aria-labelledby="dialog-title">
					<DialogHeader>
						<DialogTitle id="dialog-title">Set Page Boxes</DialogTitle>
						<IconButton type="button" aria-label="Close">
							<X size={25} strokeWidth={1.5} />
						</IconButton>
					</DialogHeader>
					<DialogBody>
						<PageBoxes />
						<Columns $align="center">
							<ChangePageSize />
							<PageRange />
						</Columns>
						<Footer>
							<PushButton type="submit" $width={101} $primary>OK</PushButton>
							<PushButton type="button" $width={101}>Cancel</PushButton>
						</Footer>
					</DialogBody>
					<Callout width="290" height="360" viewBox="916 529 290 360">
						<CalloutStroke d="M1012 641L928 715M1081 667L1193 872" />
						<CalloutDisc cx="1057" cy="604" r="63" />
						<CalloutNumber x="1057" y="625">1</CalloutNumber>
					</Callout>
				</Dialog>
			</DialogLayer>
		</Shell>
	);
}

export default App;
